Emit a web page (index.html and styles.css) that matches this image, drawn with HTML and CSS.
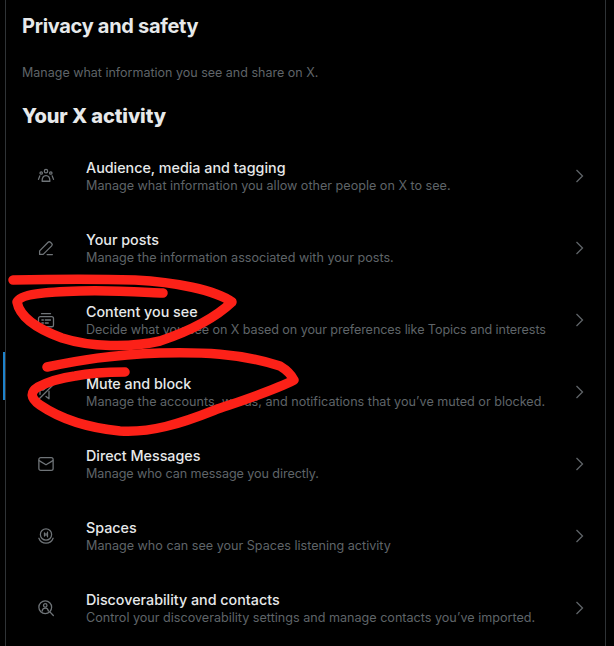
FILE: index.html
```html
<!DOCTYPE html>
<html lang="en">
<head>
<meta charset="utf-8">
<title>Privacy and safety</title>
<link rel="stylesheet" href="styles.css">
</head>
<body>
<main class="panel">
  <span class="active-mark"></span>
  <h1 class="page-title">Privacy and safety</h1>
  <p class="page-sub">Manage what information you see and share on X.</p>
  <h2 class="section-title">Your X activity</h2>
  <ul class="list">
    <li class="row">
      <svg class="icon" viewBox="0 0 24 24"><circle cx="12" cy="5.500" r="2.200"/><circle cx="5.600" cy="8" r="1.600"/><circle cx="18.400" cy="8" r="1.600"/><path d="M6.800 19c0-4.500 2-7.500 5.200-7.500s5.200 3 5.200 7.500z"/><path d="M3.800 11.800 2 16.500M20.200 11.800l1.800 4.700"/></svg>
      <div class="text"><div class="name">Audience, media and tagging</div><div class="desc">Manage what information you allow other people on X to see.</div></div>
      <svg class="chev" viewBox="0 0 10 14"><path d="M1.500 1l6 6-6 6"/></svg>
    </li>
    <li class="row">
      <svg class="icon" viewBox="0 0 24 24"><path d="M3.500 20.500v-4.700L14.800 4.400a2.200 2.200 0 0 1 3.100 0l1.700 1.700a2.200 2.200 0 0 1 0 3.100L8.200 20.500z"/><path d="M13.500 20.800h7"/></svg>
      <div class="text"><div class="name">Your posts</div><div class="desc">Manage the information associated with your posts.</div></div>
      <svg class="chev" viewBox="0 0 10 14"><path d="M1.500 1l6 6-6 6"/></svg>
    </li>
    <li class="row">
      <svg class="icon" viewBox="0 0 24 24"><rect x="2" y="7.500" width="20" height="13.500" rx="2.500"/><path d="M6 3.500h12M6.500 12h2M6.500 16h2M11 12h7M11 16h4"/></svg>
      <div class="text"><div class="name">Content you see</div><div class="desc tight">Decide what you see on X based on your preferences like Topics and interests</div></div>
      <svg class="chev" viewBox="0 0 10 14"><path d="M1.500 1l6 6-6 6"/></svg>
    </li>
    <li class="row">
      <svg class="icon" viewBox="0 0 24 24"><path d="M3 21 21 3"/><path d="M4 15V9.500h4l6-4.500M16 11v10l-4-3"/></svg>
      <div class="text"><div class="name">Mute and block</div><div class="desc">Manage the accounts, words, and notifications that you’ve muted or blocked.</div></div>
      <svg class="chev" viewBox="0 0 10 14"><path d="M1.500 1l6 6-6 6"/></svg>
    </li>
    <li class="row">
      <svg class="icon" viewBox="0 0 24 24"><rect x="2.500" y="3.500" width="19" height="17" rx="2.500"/><path d="M2.800 7.500 12 13l9.200-5.500"/></svg>
      <div class="text"><div class="name">Direct Messages</div><div class="desc tight">Manage who can message you directly.</div></div>
      <svg class="chev" viewBox="0 0 10 14"><path d="M1.500 1l6 6-6 6"/></svg>
    </li>
    <li class="row">
      <svg class="icon" viewBox="0 0 24 24"><circle cx="12" cy="10" r="7.500"/><path d="M10 8v4M14 7v6M12 9v2"/><path d="M2.500 15c1.500 4 5 6.500 9.500 6.500s8-2.500 9.500-6.500"/></svg>
      <div class="text"><div class="name">Spaces</div><div class="desc">Manage who can see your Spaces listening activity</div></div>
      <svg class="chev" viewBox="0 0 10 14"><path d="M1.500 1l6 6-6 6"/></svg>
    </li>
    <li class="row">
      <svg class="icon" viewBox="0 0 24 24"><circle cx="11" cy="11" r="8.500"/><circle cx="11" cy="8.500" r="2.300"/><path d="M6.800 16c.5-2.500 2.200-3.800 4.200-3.800s3.700 1.300 4.200 3.800"/><path d="M17.200 17.200 21.800 22"/></svg>
      <div class="text"><div class="name">Discoverability and contacts</div><div class="desc">Control your discoverability settings and manage contacts you’ve imported.</div></div>
      <svg class="chev" viewBox="0 0 10 14"><path d="M1.500 1l6 6-6 6"/></svg>
    </li>
  </ul>
</main>
<svg class="scribble" viewBox="0 0 614 646">
  <path d="M13 280C60 279 100 279 135 280C175 282 215 290 232 302C215 318 190 331 160 341C130 348 90 347 62 338C40 330 20 318 17 302C20 294 45 292 80 291C110 290 140 292 163 293"/>
  <path d="M47 367C80 360 110 355 160 353C200 352 240 353 280 366Q290 372 294 380C275 390 250 398 215 410C180 424 150 433 120 431C90 428 62 420 40 405C30 398 30 392 38 387C50 381 60 378 75 376C95 372 110 372 125 372"/>
</svg>
</body>
</html>
```

FILE: styles.css
```css
* { box-sizing: border-box; }
html, body { margin: 0; height: 100%; overflow: hidden; background: #000; }
body { font-family: Inter, "Liberation Sans", sans-serif; position: relative; }
.panel {
  position: relative;
  width: 601px;
  height: 646px;
  margin-left: 5px;
  padding-top: 14px;
  border-left: 1px solid #2f3336;
  border-right: 1px solid #2f3336;
}
.active-mark {
  position: absolute;
  left: -3px;
  top: 352px;
  width: 2px;
  height: 48px;
  background: #1d83cc;
}
.page-title {
  margin: 0 0 0 16px;
  font-size: 20px;
  line-height: 24px;
  font-weight: 700;
  letter-spacing: -0.3px;
  color: #e7e9ea;
}
.page-sub {
  margin: 27px 0 0 16px;
  font-size: 12.500px;
  line-height: 16px;
  color: #5f6468;
}
.section-title {
  margin: 23px 0 0 16px;
  font-size: 20px;
  line-height: 24px;
  font-weight: 800;
  letter-spacing: -0.1px;
  color: #e7e9ea;
}
.list {
  list-style: none;
  margin: 12px 0 0;
  padding: 0;
}
.row {
  display: flex;
  align-items: center;
  height: 72px;
  padding: 0 20px 0 31px;
}
.icon {
  flex: none;
  width: 18px;
  height: 18px;
  margin-right: 31px;
  fill: none;
  stroke: #6f7478;
  stroke-width: 1.700;
  stroke-linecap: round;
  stroke-linejoin: round;
}
.text { flex: 1; min-width: 0; height: 34px; }
.name {
  font-size: 14.300px;
  line-height: 18px;
  font-weight: 500;
  color: #e7e9ea;
}
.desc {
  margin-top: 1px;
  font-size: 12.600px;
  line-height: 16px;
  color: #5f6468;
  white-space: nowrap;
}
.tight { letter-spacing: -0.08px; }
.chev {
  flex: none;
  width: 10px;
  height: 14px;
  fill: none;
  stroke: #5f6468;
  stroke-width: 1.300;
}
.scribble {
  position: absolute;
  left: 0;
  top: 0;
  width: 614px;
  height: 646px;
  fill: none;
  stroke: #fc2118;
  stroke-width: 9.500;
  stroke-linecap: round;
  stroke-linejoin: round;
  pointer-events: none;
}
```
